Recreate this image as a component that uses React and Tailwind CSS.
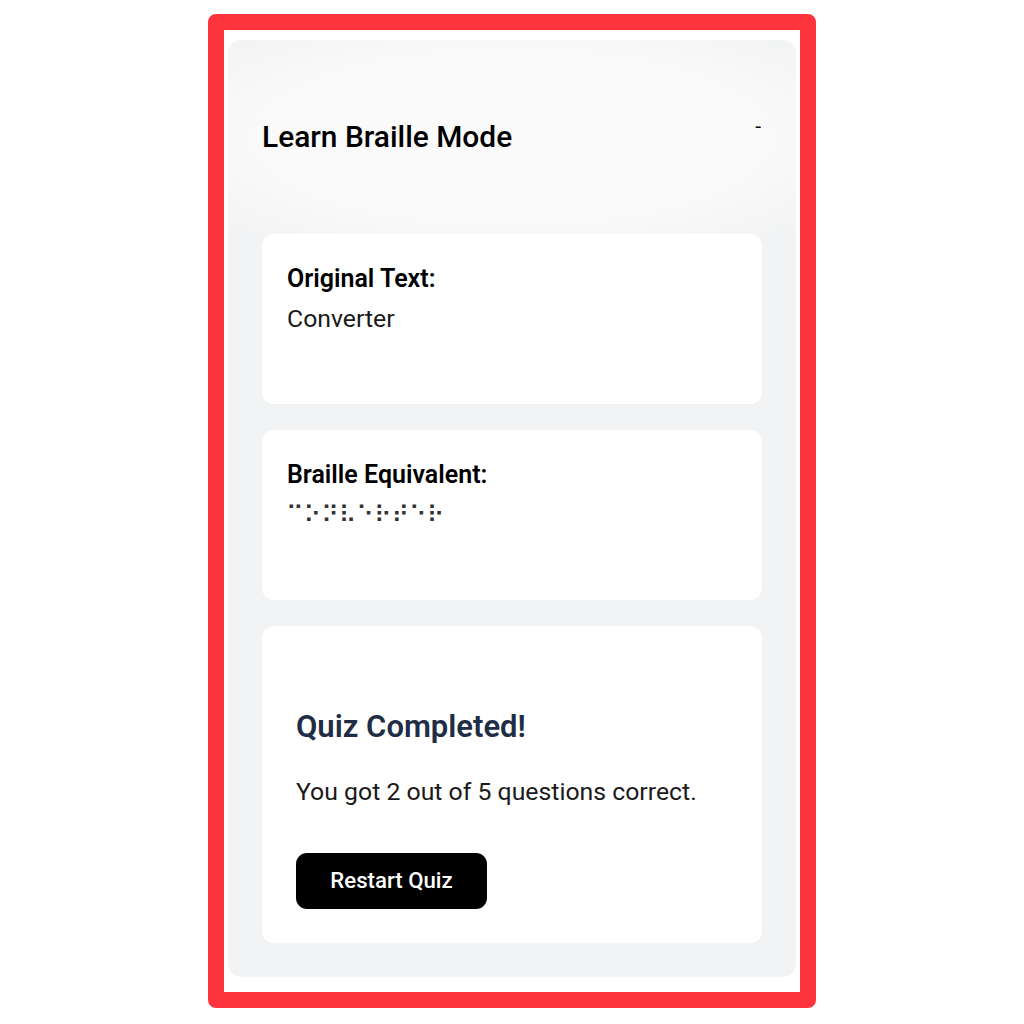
export default function App() {
  return (
    <div className="min-h-screen bg-white pt-[14px] font-['Roboto',sans-serif]">
      <div className="mx-auto w-[608px] h-[994px] border-[16px] border-[#fe343c] rounded-[8px] px-[4px] pt-[10px] bg-white">
        <div className="h-[937px] rounded-[14px] bg-[#f2f3f4] px-[34px] overflow-hidden">
          <header className="h-[194px] -mx-[34px] px-[34px] flex justify-between bg-[radial-gradient(ellipse_at_50%_50%,#fafafa_60%,#f2f3f4_100%)]">
            <h1 className="mt-[79px] text-[29.9px] leading-[36px] font-medium text-black">Learn Braille Mode</h1>
            <span className="mt-[72px] mr-[1px] text-[21px] leading-[28px] text-black">-</span>
          </header>

          <div className="flex flex-col gap-[26px]">
            <section className="h-[170px] bg-white rounded-[12px] px-[25px] pt-[29px]">
              <h2 className="text-[25px] leading-[32px] font-semibold text-black">Original Text:</h2>
              <p className="mt-[8px] text-[24.8px] leading-[32px] text-[#1a1a1a]">Converter</p>
            </section>

            <section className="h-[170px] bg-white rounded-[12px] px-[25px] pt-[29px]">
              <h2 className="text-[25px] leading-[32px] font-semibold text-black">Braille Equivalent:</h2>
              <p className="mt-[8px] -ml-[1px] text-[24px] leading-[32px] text-[#333] font-['DejaVu_Sans',sans-serif]">⠉⠕⠝⠧⠑⠗⠞⠑⠗</p>
            </section>

            <section className="h-[317px] bg-white rounded-[12px] px-[34px] pt-[81px]">
              <h2 className="text-[31px] leading-[40px] font-semibold text-[#1f2d47]">Quiz Completed!</h2>
              <p className="mt-[25px] text-[24.8px] leading-[40px] text-[#1a1a1a]">You got 2 out of 5 questions correct.</p>
              <button className="mt-[41px] w-[191px] h-[56px] rounded-[11px] bg-black text-white text-[22.2px] font-medium">Restart Quiz</button>
            </section>
          </div>
        </div>
      </div>
    </div>
  );
}
